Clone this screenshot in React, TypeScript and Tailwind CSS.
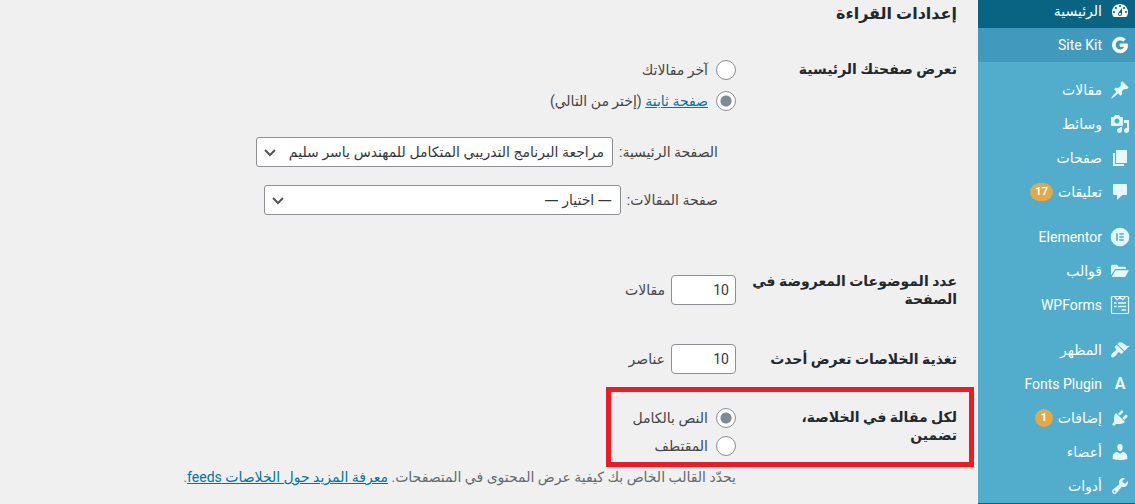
import type { ReactNode } from "react"
import { FaGoogle } from "react-icons/fa"
import { clsx } from "clsx"

type MenuItem = {
  label: string
  icon: ReactNode
  badge?: number
  hover?: boolean
}

const Dashicon = ({ d }: { d: string }) => (
  <svg viewBox="0 0 20 20" className="size-5" fill="currentColor" fillRule="evenodd" aria-hidden="true">
    <path d={d} />
  </svg>
)

const dashboardPath =
  "M3.76 16h12.48c1.1-1.37 1.76-3.11 1.76-5 0-4.42-3.58-8-8-8s-8 3.58-8 8c0 1.89.66 3.63 1.76 5zM10 4c.55 0 1 .45 1 1s-.45 1-1 1-1-.45-1-1 .45-1 1-1zM6 6c.55 0 1 .45 1 1s-.45 1-1 1-1-.45-1-1 .45-1 1-1zm8 0c.55 0 1 .45 1 1s-.45 1-1 1-1-.45-1-1 .45-1 1-1zm-5.37 5.55L12 7v6c0 1.1-.9 2-2 2s-2-.9-2-2c0-.57.24-1.08.63-1.45zM4 10c.55 0 1 .45 1 1s-.45 1-1 1-1-.45-1-1 .45-1 1-1zm12 0c.55 0 1 .45 1 1s-.45 1-1 1-1-.45-1-1 .45-1 1-1zm-5 3c0-.55-.45-1-1-1s-1 .45-1 1 .45 1 1 1 1-.45 1-1z"

const menuGroups: MenuItem[][] = [
  [
    {
      label: "مقالات",
      icon: (
        <Dashicon d="M10.44 3.02l1.82-1.82 6.36 6.35-1.83 1.82c-1.05-.68-2.48-.57-3.41.36l-.75.75c-.92.93-1.04 2.35-.35 3.41l-1.83 1.82-2.41-2.41-2.8 2.79c-.42.42-3.38 2.71-3.8 2.29s1.86-3.39 2.28-3.81l2.79-2.79L4.1 9.36l1.83-1.82c1.05.69 2.48.57 3.4-.36l.75-.75c.93-.92 1.05-2.35.36-3.41z" />
      ),
    },
    {
      label: "وسائط",
      icon: (
        <Dashicon d="M13 11V4c0-.55-.45-1-1-1h-1.67L9 1H5L3.67 3H2c-.55 0-1 .45-1 1v7c0 .55.45 1 1 1h10c.55 0 1-.45 1-1zM7 4.5c1.38 0 2.5 1.12 2.5 2.5S8.38 9.5 7 9.5 4.5 8.38 4.5 7 5.62 4.5 7 4.5zM14 6h5v10.5c0 1.38-1.12 2.5-2.5 2.5S14 17.88 14 16.5s1.12-2.5 2.5-2.5c.17 0 .34.02.5.05V9h-3V6zm-4 8.05V13h2v3.5c0 1.38-1.12 2.5-2.5 2.5S7 17.88 7 16.5 8.12 14 9.5 14c.17 0 .34.02.5.05z" />
      ),
    },
    { label: "صفحات", icon: <Dashicon d="M6 15V2h11v13H6zm-1 1h9v2H3V5h2v11z" /> },
    {
      label: "تعليقات",
      badge: 17,
      icon: <Dashicon d="M4 2h12c.6 0 1 .4 1 1v9c0 .6-.4 1-1 1h-3.500l-5.500 5v-5H4c-.6 0-1-.4-1-1V3c0-.6.4-1 1-1z" />,
    },
  ],
  [
    {
      label: "Elementor",
      icon: (
        <Dashicon d="M10 .7a9.300 9.300 0 1 0 0 18.600A9.300 9.300 0 0 0 10 .7zM6.200 6.200h1.600v7.600H6.200zM9.300 6.200h4.500v1.600H9.300zM9.300 9.200h4.500v1.600H9.300zM9.300 12.200h4.500v1.600H9.300z" />
      ),
    },
    {
      label: "قوالب",
      icon: (
        <Dashicon d="M1 14.200V5.200c0-.9.600-1.500 1.500-1.500h4.300l2 2h5.700c.8 0 1.500.7 1.500 1.500v.9H6.200c-.8 0-1.500.4-1.900 1.100zM1.700 16l3.400-5.900c.3-.5.700-.8 1.300-.8H19l-3.300 5.900c-.3.500-.8.800-1.400.8z" />
      ),
    },
    {
      label: "WPForms",
      icon: (
        <svg viewBox="0 0 20 20" className="size-5" fill="none" stroke="currentColor" aria-hidden="true">
          <rect x="1.500" y="1.500" width="17" height="17" rx="1" strokeWidth="1.200" />
          <path d="M4.500 2l2.800 2.600L10 2.300l2.700 2.300L15.500 2" strokeWidth="1.200" />
          <path d="M4 8h2.500M8 8h8M4 11.500h2.500M8 11.500h8M11.500 15H16" strokeWidth="1.600" />
        </svg>
      ),
    },
  ],
  [
    {
      label: "المظهر",
      icon: (
        <Dashicon d="M14.48 11.06L7.41 3.99l1.5-1.5c.5-.56 2.3-.47 3.51.32 1.21.8 1.43 1.28 2.91 2.1 1.18.64 2.45 1.26 4.45.85zm-.71.71L6.7 4.7 4.93 6.47c-.39.39-.39 1.02 0 1.41l1.06 1.06c.39.39.39 1.03 0 1.42-.6.6-1.43 1.11-2.21 1.69-.35.26-.7.53-1.01.84C1.43 14.23.4 16.08 1.4 17.07c.99 1 2.84-.03 4.18-1.36.31-.31.58-.66.85-1.02.57-.78 1.08-1.61 1.69-2.21.39-.39 1.02-.39 1.41 0l1.06 1.06c.39.39 1.02.39 1.41 0z" />
      ),
    },
    { label: "Fonts Plugin", icon: <span className="text-base font-bold">A</span> },
    {
      label: "إضافات",
      badge: 1,
      icon: (
        <Dashicon d="M13.11 4.36L9.87 7.6 8 5.73l3.24-3.24c.35-.34 1.05-.2 1.56.32.52.51.66 1.21.31 1.55zm-8 1.77l.91-1.12 9.01 9.01-1.19.84c-.71.71-2.63 1.16-3.82 1.16H6.14L4.9 17.26c-.59.59-1.54.59-2.12 0-.59-.58-.59-1.53 0-2.12l1.24-1.24v-3.88c0-1.13.4-3.19 1.09-3.89zm7.26 3.97l3.24-3.24c.34-.35 1.04-.21 1.55.31.52.51.66 1.21.31 1.55l-3.24 3.25z" />
      ),
    },
    {
      label: "أعضاء",
      icon: (
        <Dashicon d="M10 9.25c-2.27 0-2.73-3.44-2.73-3.44C7 4.02 7.82 2 9.97 2c2.16 0 2.98 2.02 2.71 3.81 0 0-.41 3.44-2.68 3.44zm0 2.57L12.72 10c2.39 0 4.52 2.33 4.52 4.53v2.49s-3.65 1.13-7.24 1.13c-3.65 0-7.24-1.13-7.24-1.13v-2.49c0-2.25 1.94-4.48 4.47-4.48z" />
      ),
    },
    {
      label: "أدوات",
      icon: (
        <Dashicon d="M16.68 9.77c-1.34 1.34-3.3 1.67-4.95.99l-5.41 6.52c-.99.99-2.59.99-3.58 0s-.99-2.59 0-3.57l6.52-5.42c-.68-1.65-.35-3.61.99-4.95 1.28-1.28 3.12-1.62 4.72-1.06l-2.89 2.89 2.82 2.82 2.86-2.87c.53 1.58.18 3.39-1.08 4.65zM3.81 16.21c.4.39 1.04.39 1.43 0 .4-.4.4-1.04 0-1.43-.39-.4-1.03-.4-1.43 0-.39.39-.39 1.03 0 1.43z" />
      ),
    },
  ],
]

const MenuLink = ({ item }: { item: MenuItem }) => (
  <a
    href="#"
    className={clsx("flex h-[34px] items-center gap-2 ps-[5px] text-white", item.hover && "bg-[#4199bd]")}
  >
    <span className="flex size-5 items-center justify-center text-[#e5f8ff]">{item.icon}</span>
    <span className="flex items-center gap-[5px]">
      {item.label}
      {item.badge && (
        <span className="flex h-[18px] min-w-[18px] items-center justify-center rounded-full bg-[#e1a948] px-[5px] text-[11px] font-bold">
          {item.badge}
        </span>
      )}
    </span>
  </a>
)

const Sidebar = () => (
  <nav className="flex w-[157px] shrink-0 flex-col bg-[#52accc] text-sm">
    <a href="#" className="flex h-7 items-center gap-2 bg-[#096484] ps-[5px] pb-1.5 text-white">
      <span>
        <Dashicon d={dashboardPath} />
      </span>
      <span>الرئيسية</span>
    </a>
    <MenuLink
      item={{
        label: "Site Kit",
        icon: <FaGoogle className="size-4 overflow-visible text-white" stroke="currentColor" strokeWidth={24} />,
        hover: true,
      }}
    />
    {menuGroups.map((group, i) => (
      <div key={i} className="pt-[11px]">
        {group.map((item) => (
          <MenuLink key={item.label} item={item} />
        ))}
      </div>
    ))}
    <div className="h-px bg-[#096484]" />
  </nav>
)

type RadioProps = { id: string; name: string; checked?: boolean; children: ReactNode }

const Radio = ({ id, name, checked, children }: RadioProps) => (
  <div className="flex h-5 items-center gap-2">
    <input
      type="radio"
      id={id}
      name={name}
      defaultChecked={checked}
      className="size-5 shrink-0 appearance-none rounded-full border border-[#8c8f94] bg-white bg-clip-padding checked:bg-[radial-gradient(circle,#7e8993_5px,white_6px)]"
    />
    <label htmlFor={id}>{children}</label>
  </div>
)

const PageSelect = ({ id, label, option }: { id: string; label: string; option: string }) => (
  <div className="flex items-center gap-1.5">
    <label htmlFor={id} className="whitespace-nowrap">
      {label}
    </label>
    <div className="relative w-[357px]">
      <select
        id={id}
        className="h-[30px] w-full appearance-none rounded-[3px] border border-[#8c8f94] bg-white ps-2 pe-6 font-['Open_Sans','DejaVu_Sans',sans-serif] text-[#32373c]"
      >
        <option>{option}</option>
      </select>
      <svg
        viewBox="0 0 12 12"
        className="pointer-events-none absolute top-[9px] left-2 size-3"
        fill="none"
        stroke="#555"
        strokeWidth="2"
        aria-hidden="true"
      >
        <path d="M1 4l5 5 5-5" />
      </svg>
    </div>
  </div>
)

const CountField = ({ id, unit }: { id: string; unit: string }) => (
  <div className="flex items-center gap-1.5">
    <input
      id={id}
      type="text"
      inputMode="numeric"
      defaultValue="10"
      className="h-[30px] w-[65px] rounded-[4px] border border-[#8c8f94] bg-white ps-1.5 text-[#32373c]"
    />
    <span>{unit}</span>
  </div>
)

const rowTitle = "w-[212px] shrink-0 text-sm leading-[18px] font-bold text-[#23282d]"

const App = () => {
  return (
    <div
      dir="rtl"
      lang="ar"
      className="flex min-h-screen items-stretch overflow-hidden bg-[#f0f0f1] font-[Roboto,'DejaVu_Sans',sans-serif] text-sm leading-5 text-[#444]"
    >
      <Sidebar />

      <main className="min-w-0 flex-1 ps-[21px]">
        <h1 className="pt-1 text-base leading-5 font-bold text-[#23282d]">إعدادات القراءة</h1>

        <form>
          <div className="mt-9 flex gap-[9px]">
            <h2 className={rowTitle}>تعرض صفحتك الرئيسية</h2>
            <fieldset>
              <Radio id="show-posts" name="front">
                آخر مقالاتك
              </Radio>
              <div className="mt-[11px]">
                <Radio id="show-page" name="front" checked>
                  <a href="#" className="text-[#0073aa] underline">
                    صفحة ثابتة
                  </a>{" "}
                  (إختر من التالي)
                </Radio>
              </div>
              <div className="mt-[26px] flex flex-col gap-[18px] ps-[18px]">
                <PageSelect
                  id="page-on-front"
                  label="الصفحة الرئيسية:"
                  option="مراجعة البرنامج التدريبي المتكامل للمهندس ياسر سليم"
                />
                <PageSelect id="page-for-posts" label="صفحة المقالات:" option="— اختيار —" />
              </div>
            </fieldset>
          </div>

          <div className="mt-[57px] flex items-center gap-[9px]">
            <label htmlFor="posts-per-page" className={rowTitle}>
              عدد الموضوعات المعروضة في الصفحة
            </label>
            <CountField id="posts-per-page" unit="مقالات" />
          </div>

          <div className="mt-9 flex items-center gap-[9px]">
            <label htmlFor="posts-per-rss" className={rowTitle}>
              تغذية الخلاصات تعرض أحدث
            </label>
            <CountField id="posts-per-rss" unit="عناصر" />
          </div>

          <div className="relative mt-[34px] flex gap-[9px]">
            <h2 className={clsx(rowTitle, "pe-4")}>لكل مقالة في الخلاصة، تضمين</h2>
            <fieldset>
              <Radio id="rss-full" name="rss" checked>
                النص بالكامل
              </Radio>
              <div className="mt-2">
                <Radio id="rss-excerpt" name="rss">
                  المقتطف
                </Radio>
              </div>
              <p className="mt-[11px] whitespace-nowrap text-[#646970]">
                يحدّد القالب الخاص بك كيفية عرض المحتوى في المتصفحات.{" "}
                <a href="#" className="text-[#0073aa] underline">
                  معرفة المزيد حول الخلاصات feeds
                </a>
                .
              </p>
            </fieldset>
            {/* highlight frame around the feed setting */}
            <div className="pointer-events-none absolute -top-[21px] -right-[17px] h-20 w-[368px] border-5 border-[#ed1c24]" />
          </div>
        </form>
      </main>
    </div>
  )
}

export default App
